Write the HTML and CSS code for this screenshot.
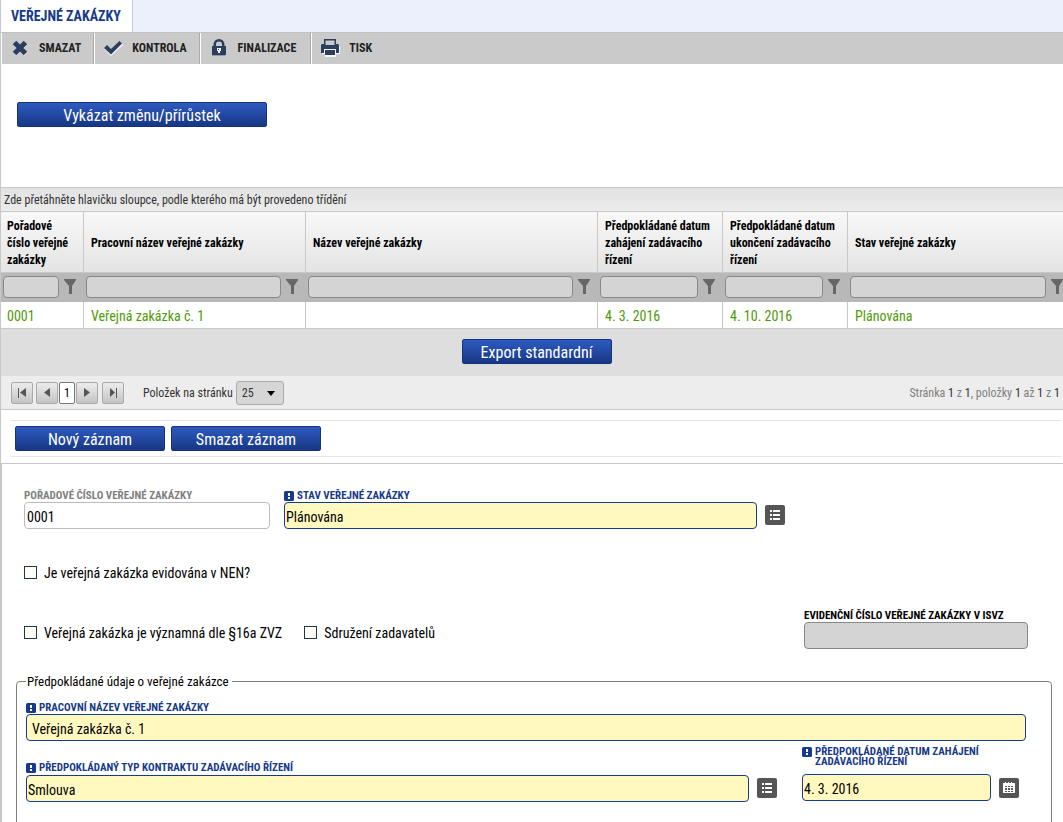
FILE: index.html
```html
<!DOCTYPE html>
<html lang="cs">
<head>
<meta charset="utf-8">
<title>Veřejné zakázky</title>
<link rel="stylesheet" href="styles.css">
</head>
<body>
<svg class="defs" aria-hidden="true">
  <symbol id="funnel" viewBox="0 0 12 15"><path d="M0 0h12v1L8 7v8H5V7L0 1z"/></symbol>
  <symbol id="alert" viewBox="0 0 10 10"><rect width="10" height="10" rx="1.5" fill="#173a8b"/><path d="M4 2h2v3H4zM4 6h2v2H4z" fill="#fff"/></symbol>
  <symbol id="list" viewBox="0 0 20 20"><path d="M5 5h2v2H5zM8 5h7v2H8zM5 9h2v2H5zM8 9h7v2H8zM5 13h2v2H5zM8 13h7v2H8z"/></symbol>
</svg>
<nav class="tabs"><a class="tab" href="#">VEŘEJNÉ ZAKÁZKY</a></nav>
<div class="toolbar">
  <button class="tool"><svg class="tool-icon" viewBox="0 0 20 20"><path class="glow" d="M4.500 5l11.500 11M16 5L4.500 16"/><path class="cross" d="M4.500 4.500l11 11M15.500 4.500l-11 11"/></svg>SMAZAT</button>
  <button class="tool"><svg class="tool-icon" viewBox="0 0 20 20"><path class="shine" d="M1 11l3-3 4 4 9-8 3 3L8 18z"/><path d="M1 10l3-3 4 4 8.500-8L19 5.500 8 16.500z"/></svg>KONTROLA</button>
  <button class="tool tool-lock"><svg class="tool-icon" viewBox="0 0 20 20"><path class="shine" d="M4 9h13v9H4z"/><path d="M3 8h1.500V6.500a5.500 5.500 0 0 1 11 0V8H17v8.500q0 1-1 1H4q-1 0-1-1zM7 8h6V6.500a3 3 0 0 0-6 0z" fill-rule="evenodd"/><path class="shine" d="M8 10h4v3h-1v2H9v-2H8z"/><path d="M9 11h1v1H9z"/></svg>FINALIZACE</button>
  <button class="tool"><svg class="tool-icon" viewBox="0 0 20 20"><path class="shine" d="M2 8h18v8h-4v3H5v-3H2z"/><path d="M4 1h12v5h2l1 1v8h-3v-4H4v4H1V7l1-1h2zM5.500 2.500V7h9V2.500zM5 12h10v5H5z" fill-rule="evenodd"/></svg>TISK</button>
</div>
<div class="report"><button class="btn btn-wide">Vykázat změnu/přírůstek</button></div>

<section class="grid">
  <div class="group-panel">Zde přetáhněte hlavičku sloupce, podle kterého má být provedeno třídění</div>
  <table class="table">
    <colgroup><col class="c-num"><col class="c-work"><col class="c-name"><col class="c-date"><col class="c-date"><col></colgroup>
    <thead>
      <tr class="head"><th>Pořadové číslo veřejné zakázky</th><th>Pracovní název veřejné zakázky</th><th>Název veřejné zakázky</th><th>Předpokládané datum zahájení zadávacího řízení</th><th>Předpokládané datum ukončení zadávacího řízení</th><th>Stav veřejné zakázky</th></tr>
      <tr class="filters">
        <td><div class="filter"><input aria-label="Filtr pořadové číslo"><svg><use href="#funnel"/></svg></div></td>
        <td><div class="filter"><input aria-label="Filtr pracovní název"><svg><use href="#funnel"/></svg></div></td>
        <td><div class="filter"><input aria-label="Filtr název"><svg><use href="#funnel"/></svg></div></td>
        <td><div class="filter"><input aria-label="Filtr datum zahájení"><svg><use href="#funnel"/></svg></div></td>
        <td><div class="filter"><input aria-label="Filtr datum ukončení"><svg><use href="#funnel"/></svg></div></td>
        <td><div class="filter"><input aria-label="Filtr stav"><svg><use href="#funnel"/></svg></div></td>
      </tr>
    </thead>
    <tbody><tr class="row"><td>0001</td><td>Veřejná zakázka č. 1</td><td></td><td>4. 3. 2016</td><td>4. 10. 2016</td><td>Plánována</td></tr></tbody>
  </table>
  <div class="export"><button class="btn">Export standardní</button></div>
  <div class="pager">
    <div class="pages">
      <button class="page" aria-label="První"><svg viewBox="0 0 20 20"><path d="M6 5h1v10H6zM14 5v9L8 9.500z"/></svg></button>
      <button class="page page-prev" aria-label="Předchozí"><svg viewBox="0 0 20 20"><path d="M13 5v9L7 9.500z"/></svg></button>
      <button class="page current">1</button>
      <button class="page page-next" aria-label="Další"><svg viewBox="0 0 20 20"><path d="M7 5v9l6-4.500z"/></svg></button>
      <button class="page" aria-label="Poslední"><svg viewBox="0 0 20 20"><path d="M13 5h1v10h-1zM7 5v9l5-4.500z"/></svg></button>
    </div>
    <label for="size">Položek na stránku</label>
    <div class="size"><select id="size"><option>25</option></select><svg viewBox="0 0 8 5"><path d="M0 0h8L4 5z"/></svg></div>
    <p class="summary">Stránka <b>1</b> z <b>1</b>, položky <b>1</b> až <b>1</b> z <b>1</b></p>
  </div>
</section>

<div class="actions"><button class="btn">Nový záznam</button><button class="btn">Smazat záznam</button></div>

<form class="form">
  <div class="line">
    <div class="field number"><label class="muted" for="number">POŘADOVÉ ČÍSLO VEŘEJNÉ ZAKÁZKY</label><input id="number" class="plain" value="0001"></div>
    <div class="field state"><label for="state"><svg><use href="#alert"/></svg>STAV VEŘEJNÉ ZAKÁZKY</label><input id="state" value="Plánována"></div>
    <button type="button" class="pick" aria-label="Vybrat stav"><svg><use href="#list"/></svg></button>
  </div>
  <div class="checks first"><label><input type="checkbox">Je veřejná zakázka evidována v NEN?</label></div>
  <div class="line split">
    <div class="checks"><label><input type="checkbox">Veřejná zakázka je významná dle §16a ZVZ</label><label><input type="checkbox">Sdružení zadavatelů</label></div>
    <div class="field evidence"><label class="dark" for="evidence">EVIDENČNÍ ČÍSLO VEŘEJNÉ ZAKÁZKY V ISVZ</label><input id="evidence" class="off" disabled></div>
  </div>
  <fieldset>
    <legend>Předpokládané údaje o veřejné zakázce</legend>
    <div class="field"><label for="work"><svg><use href="#alert"/></svg>PRACOVNÍ NÁZEV VEŘEJNÉ ZAKÁZKY</label><input id="work" class="roomy" value="Veřejná zakázka č. 1"></div>
    <div class="line contract">
      <div class="field type"><label for="type"><svg><use href="#alert"/></svg>PŘEDPOKLÁDANÝ TYP KONTRAKTU ZADÁVACÍHO ŘÍZENÍ</label><input id="type" value="Smlouva"></div>
      <button type="button" class="pick" aria-label="Vybrat typ"><svg><use href="#list"/></svg></button>
      <div class="field start"><label for="start"><svg><use href="#alert"/></svg><span>PŘEDPOKLÁDANÉ DATUM ZAHÁJENÍ ZADÁVACÍHO ŘÍZENÍ</span></label><input id="start" value="4. 3. 2016"></div>
      <button type="button" class="pick" aria-label="Kalendář"><svg viewBox="0 0 20 20"><path fill-rule="evenodd" d="M4 5h2V4h1v1h2V4h1v1h2V4h1v1h3v10H4zM6 8v1h2V8zM9 8v1h2V8zM12 8v1h2V8zM6 10v2h2v-2zM9 10v2h2v-2zM12 10v2h2v-2zM6 13v1h2v-1zM9 13v1h2v-1zM12 13v1h2v-1z"/></svg></button>
    </div>
  </fieldset>
</form>
</body>
</html>
```
FILE: styles.css
```css
* { box-sizing: border-box; }
body {
  margin: 0; height: 100vh; overflow: hidden;
  display: flex; flex-direction: column;
  border-left: 1px solid #c8c8c8; background: #fff; color: #000;
  font-family: "Roboto Condensed", "Liberation Sans Narrow", Roboto, sans-serif; font-size: 14px;
}
body > * { flex-shrink: 0; }
button, input, select { font: inherit; color: inherit; margin: 0; }
.defs { display: none; }

.tabs { display: flex; height: 32px; background: #ecf0fc; }
.tab { padding: 0 11px 0 10px; line-height: 32px; border-right: 1px solid #c8c8c8; background: #fff; color: #173a8b; font-weight: 700; text-decoration: none; }
.toolbar { display: flex; height: 32px; background: #cacaca; border-top: 1px solid #c2c2c2; }
.tool { display: flex; align-items: center; gap: 9px; padding: 0 12px 2px 8px; border: 0; border-left: 1px solid #fff; border-right: 1px solid #aaa; background: none; color: #222; font-size: 12px; font-weight: 700; }
.tool:last-child { border-right: 0; }
.tool-lock { padding-right: 14px; }
.tool-icon { width: 20px; height: 20px; fill: #2c3e5d; }
.tool .shine { fill: #f4f4f4; }
.cross, .glow { stroke: #2c3e5d; stroke-width: 5; }
.glow { stroke: #eee; }

.report { padding: 38px 16px 60px; }
.btn { display: block; width: 150px; height: 25px; padding: 2px 0 0; border: 1px solid #15337c; border-radius: 2px; background: linear-gradient(#2e5ac0, #173784); color: #fff; font-size: 16px; line-height: 21px; }
.btn-wide { width: 250px; }

.group-panel { height: 24px; padding-left: 3px; border-top: 1px solid #c8c8c8; background: linear-gradient(#e2e2e2, #ececec); color: #333; font-size: 12px; line-height: 24px; }
.table { width: 100%; table-layout: fixed; border-collapse: separate; border-spacing: 0; border-top: 1px solid #c8c8c8; }
.c-num { width: 83px; } .c-work { width: 222px; } .c-name { width: 292px; } .c-date { width: 125px; }
.table th, .table td { border-right: 1px solid #c8c8c8; text-align: left; }
.table th:last-child, .table td:last-child { border-right: 0; }
.head th { height: 61px; padding: 5px 7px 3px; border-bottom: 1px solid #c8c8c8; background: linear-gradient(#f8f8f8, #e4e4e4); font-size: 12px; line-height: 17px; }
.head th:first-child { padding-left: 6px; }
.filters td { height: 29px; padding: 0 0 2px; background: #b8b8b8; }
.table .filters td { border-color: #b8b8b8; }
.filter { display: flex; align-items: center; gap: 5px; padding: 0 7px 0 2px; }
td:last-child .filter { padding-right: 0; }
.filter input { flex: 1; min-width: 0; height: 22px; border: 1px solid #888; border-radius: 4px; background: #d4d4d4; }
.filter svg { width: 12px; height: 15px; fill: #666; flex: none; }
.row td { height: 27px; padding: 2px 7px 0; border-bottom: 1px solid #c8c8c8; color: #4f9a06; line-height: 24px; }
.row td:first-child { padding-left: 6px; }
.export { display: flex; justify-content: center; height: 47px; padding: 10px 0 0 9px; background: #dedede; }
.pager { display: flex; align-items: center; height: 34px; padding: 0 3px 0 10px; border-bottom: 1px solid #c8c8c8; background: #ededed; color: #333; font-size: 12px; }
.pages { display: flex; gap: 1px; margin-right: 19px; }
.page { width: 22px; height: 22px; padding: 0; border: 1px solid #aaa; border-radius: 2px; background: linear-gradient(#ececec, #c4c4c4); }
.page svg { display: block; width: 20px; height: 20px; fill: #555; }
.page-prev { margin-left: 2px; }
.page-next { margin-right: 3px; }
.current { width: 16px; background: #fff; color: #000; border-color: #777; }
.size { position: relative; margin-left: 3px; }
.size select { display: block; appearance: none; width: 48px; height: 24px; padding: 0 5px; border: 1px solid #aaa; border-radius: 3px; background: #d6d6d6; font-size: 12px; }
.size svg { position: absolute; right: 9px; top: 10px; width: 8px; height: 5px; pointer-events: none; }
.summary { margin: 0 0 0 auto; color: #808080; }
.summary b { color: #333; font-weight: 400; }

.actions { display: flex; gap: 6px; margin: 10px 2px 6px 10px; padding: 5px 4px; border: solid #e5e5e5; border-width: 1px 0; }
.form { flex: 1 0 0; min-height: 0; overflow: hidden; padding: 25px 11px 0 14px; border-top: 1px solid #c8c8c8; border-left: 1px solid #c8c8c8; }
.line { display: flex; align-items: flex-end; gap: 8px; }
.form > .line { padding-left: 8px; }
.field label { display: flex; align-items: center; gap: 3px; height: 13px; color: #173a8b; font-size: 11px; line-height: 12px; font-weight: 700; white-space: nowrap; }
.field svg { width: 10px; height: 10px; flex: none; }
.field label.muted { color: #808080; }
.field label.dark { color: #000; }
.field input { display: block; width: 100%; height: 27px; padding: 3px 1px 0; border: 1px solid #173a8b; border-radius: 4px; background: #fff9c0; font-size: 14px; }
.field input.plain { padding-left: 2px; border-color: #bbb; background: #fff; }
.field input.off { border-color: #888; background: #d4d4d4; }
.field input.roomy { padding-left: 5px; }
.number { width: 246px; margin-right: 6px; }
.state { width: 473px; }
.pick { flex: none; width: 20px; height: 20px; margin-bottom: 4px; padding: 0; border: 0; border-radius: 2px; background: #555; }
.pick svg { display: block; width: 20px; height: 20px; fill: #fff; }
.checks { display: flex; gap: 22px; font-size: 14px; line-height: 20px; }
.checks label { display: flex; align-items: center; gap: 7px; }
.checks input { appearance: none; width: 13px; height: 13px; margin-bottom: 2px; border: 1px solid #1c3c3c; background: #fffdf8; }
.checks input:checked { background: #173a8b; }
.first { padding: 34px 0 26px 8px; }
.form > .split { justify-content: space-between; align-items: flex-start; padding-right: 24px; }
.split .checks { padding-top: 14px; }
.evidence { width: 224px; }
fieldset { min-width: 0; height: 300px; margin: 24px 0 0; padding: 11px 25px 0 9px; border: 1px solid #808080; border-radius: 4px; }
legend { padding: 1px 3px 0 1px; font-size: 13px; line-height: 16px; }
.contract { margin-top: 6px; margin-right: -17px; padding-right: 24px; }
.type { flex: 1; }
.start { width: 189px; margin-left: 17px; margin-bottom: 1px; }
.type label, .start label { margin-bottom: 1px; }
.start label { height: 26px; align-items: flex-start; line-height: 10px; white-space: normal; }
```
